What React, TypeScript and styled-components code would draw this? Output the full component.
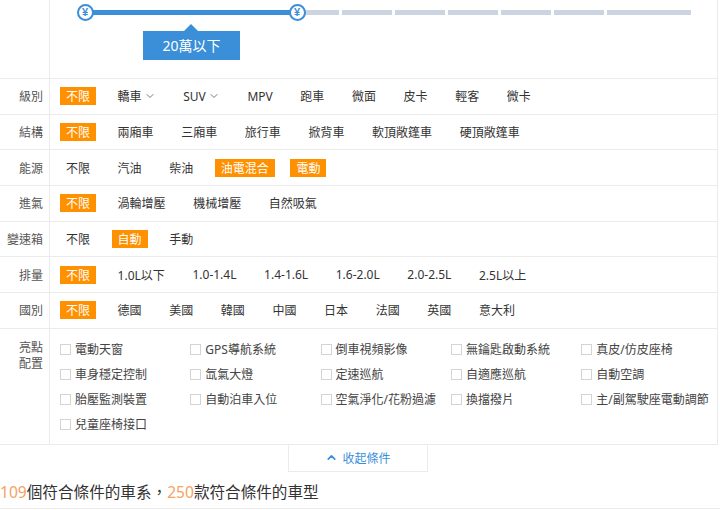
import styled, { createGlobalStyle } from "styled-components";
import { ChevronDown, ChevronUp } from "lucide-react";

const Blue = "#3a8fd8";
const Orange = "#ff9000";
const Line = "#ebebeb";

type Filter = {
  label: string;
  options: string[];
  selected: number[];
  dropdown?: number[];
};

const filters: Filter[] = [
  {
    label: "級別",
    options: ["不限", "轎車", "SUV", "MPV", "跑車", "微面", "皮卡", "輕客", "微卡"],
    selected: [0],
    dropdown: [1, 2],
  },
  {
    label: "結構",
    options: ["不限", "兩廂車", "三廂車", "旅行車", "掀背車", "軟頂敞篷車", "硬頂敞篷車"],
    selected: [0],
  },
  {
    label: "能源",
    options: ["不限", "汽油", "柴油", "油電混合", "電動"],
    selected: [3, 4],
  },
  {
    label: "進氣",
    options: ["不限", "渦輪增壓", "機械增壓", "自然吸氣"],
    selected: [0],
  },
  {
    label: "變速箱",
    options: ["不限", "自動", "手動"],
    selected: [1],
  },
  {
    label: "排量",
    options: ["不限", "1.0L以下", "1.0-1.4L", "1.4-1.6L", "1.6-2.0L", "2.0-2.5L", "2.5L以上"],
    selected: [0],
  },
  {
    label: "國別",
    options: ["不限", "德國", "美國", "韓國", "中國", "日本", "法國", "英國", "意大利"],
    selected: [0],
  },
];

const features = [
  "電動天窗",
  "GPS導航系統",
  "倒車視頻影像",
  "無鑰匙啟動系統",
  "真皮/仿皮座椅",
  "車身穩定控制",
  "氙氣大燈",
  "定速巡航",
  "自適應巡航",
  "自動空調",
  "胎壓監測裝置",
  "自動泊車入位",
  "空氣淨化/花粉過濾",
  "換擋撥片",
  "主/副駕駛座電動調節",
  "兒童座椅接口",
];

const grayTicks = [40, 50, 50, 50, 50, 50, 84];

export default function App() {
  return (
    <>
      <GlobalStyle />
      <Panel>
        <SliderRow>
          <LabelCell />
          <SliderArea>
            <Track>
              <BlueBar />
              {grayTicks.map((w, i) => (
                <GrayTick key={i} style={{ width: w }} />
              ))}
            </Track>
            <Knob $left={0}>¥</Knob>
            <Knob $left={212}>¥</Knob>
            <PriceTip>20萬以下</PriceTip>
          </SliderArea>
        </SliderRow>

        {filters.map((f) => (
          <Row key={f.label}>
            <Label>{f.label}</Label>
            <Options>
              {f.options.map((o, i) => (
                <Option key={o} $active={f.selected.includes(i)}>
                  {o}
                  {f.dropdown?.includes(i) && (
                    <ChevronDown size={12} strokeWidth={1.6} color="#555" />
                  )}
                </Option>
              ))}
            </Options>
          </Row>
        ))}

        <FeatureRow>
          <FeatureLabel>
            <span>亮點</span>
            <span>配置</span>
          </FeatureLabel>
          <FeatureGrid>
            {features.map((f) => (
              <Feature key={f}>
                <CheckBox />
                {f}
              </Feature>
            ))}
          </FeatureGrid>
        </FeatureRow>
      </Panel>

      <CollapseTab>
        <ChevronUp size={13} strokeWidth={3.2} />
        收起條件
      </CollapseTab>

      <Summary>
        <Count>109</Count>個符合條件的車系，<Count>250</Count>款符合條件的車型
      </Summary>
    </>
  );
}

const GlobalStyle = createGlobalStyle`
  body {
    margin: 0;
    background: #fff;
    color: #333;
    font-family: "Noto Sans", "Noto Sans CJK TC", sans-serif;
  }
`;

const Panel = styled.div`
  width: 718px;
  box-sizing: border-box;
  border-right: 1px solid ${Line};
  border-bottom: 1px solid ${Line};
`;

const SliderRow = styled.div`
  display: grid;
  grid-template-columns: 50px 1fr;
  height: 78px;
  border-bottom: 1px solid ${Line};
`;

const LabelCell = styled.div`
  border-right: 1px solid ${Line};
`;

const SliderArea = styled.div`
  position: relative;
  padding: 10px 0 0 35px;
`;

const Track = styled.div`
  display: flex;
  gap: 3px;
  height: 5px;
`;

const BlueBar = styled.div`
  width: 212px;
  margin-right: -1px;
  background: ${Blue};
`;

const GrayTick = styled.div`
  background: #cdd4e1;
`;

const Knob = styled.div<{ $left: number }>`
  position: absolute;
  top: 4px;
  left: ${(p) => 35 + p.$left - 8.5}px;
  width: 17px;
  height: 17px;
  box-sizing: border-box;
  border: 2px solid ${Blue};
  border-radius: 50%;
  background: #fff;
  color: ${Blue};
  font: bold 11px/13px "Liberation Sans", sans-serif;
  text-align: center;
`;

const PriceTip = styled.div`
  position: absolute;
  top: 31px;
  left: 93px;
  width: 97px;
  height: 29px;
  background: ${Blue};
  color: #fff;
  font-size: 14px;
  line-height: 29px;
  text-align: center;

  &::before {
    content: "";
    position: absolute;
    top: -7px;
    left: 41px;
    border: 7px solid transparent;
    border-top: 0;
    border-bottom-color: ${Blue};
  }
`;

const Row = styled.div`
  display: grid;
  grid-template-columns: 50px 1fr;
  height: 35.7px;
  box-sizing: border-box;
  border-bottom: 1px solid ${Line};
`;

const Label = styled.div`
  display: flex;
  align-items: center;
  justify-content: flex-end;
  padding-right: 6px;
  border-right: 1px solid ${Line};
  font-size: 12px;
  color: #555;
`;

const Options = styled.div`
  display: flex;
  align-items: center;
  padding-left: 10px;
`;

const Option = styled.span<{ $active: boolean }>`
  display: inline-flex;
  align-items: center;
  gap: 2px;
  height: 18px;
  padding: 0 6px;
  margin-right: 15.6px;
  font-size: 12px;
  background: ${(p) => (p.$active ? Orange : "transparent")};
  color: ${(p) => (p.$active ? "#fff" : "#333")};
`;

const FeatureRow = styled.div`
  display: grid;
  grid-template-columns: 50px 1fr;
`;

const FeatureLabel = styled.div`
  display: flex;
  flex-direction: column;
  align-items: flex-end;
  padding: 11px 6px 0 0;
  border-right: 1px solid ${Line};
  font-size: 12px;
  line-height: 16px;
  color: #555;
`;

const FeatureGrid = styled.div`
  display: grid;
  grid-template-columns: repeat(5, 130.3px);
  grid-auto-rows: 25px;
  padding: 8px 0 7px 10px;
`;

const Feature = styled.div`
  display: flex;
  align-items: center;
  gap: 4px;
  font-size: 12px;
  color: #444;
  white-space: nowrap;
`;

const CheckBox = styled.span`
  flex-shrink: 0;
  width: 11px;
  height: 11px;
  box-sizing: border-box;
  border: 1px solid #d4d4d4;
`;

const CollapseTab = styled.div`
  display: flex;
  align-items: center;
  justify-content: center;
  gap: 4px;
  width: 140px;
  height: 27px;
  margin-left: 288px;
  box-sizing: border-box;
  border: 1px solid ${Line};
  border-top: 0;
  color: ${Blue};
  font-size: 12px;
`;

const Summary = styled.div`
  margin-top: 10px;
  padding-bottom: 5px;
  border-bottom: 1px solid ${Line};
  font-size: 15.6px;
  line-height: 21px;
  color: #333;
`;

const Count = styled.span`
  color: #f5a263;
`;
